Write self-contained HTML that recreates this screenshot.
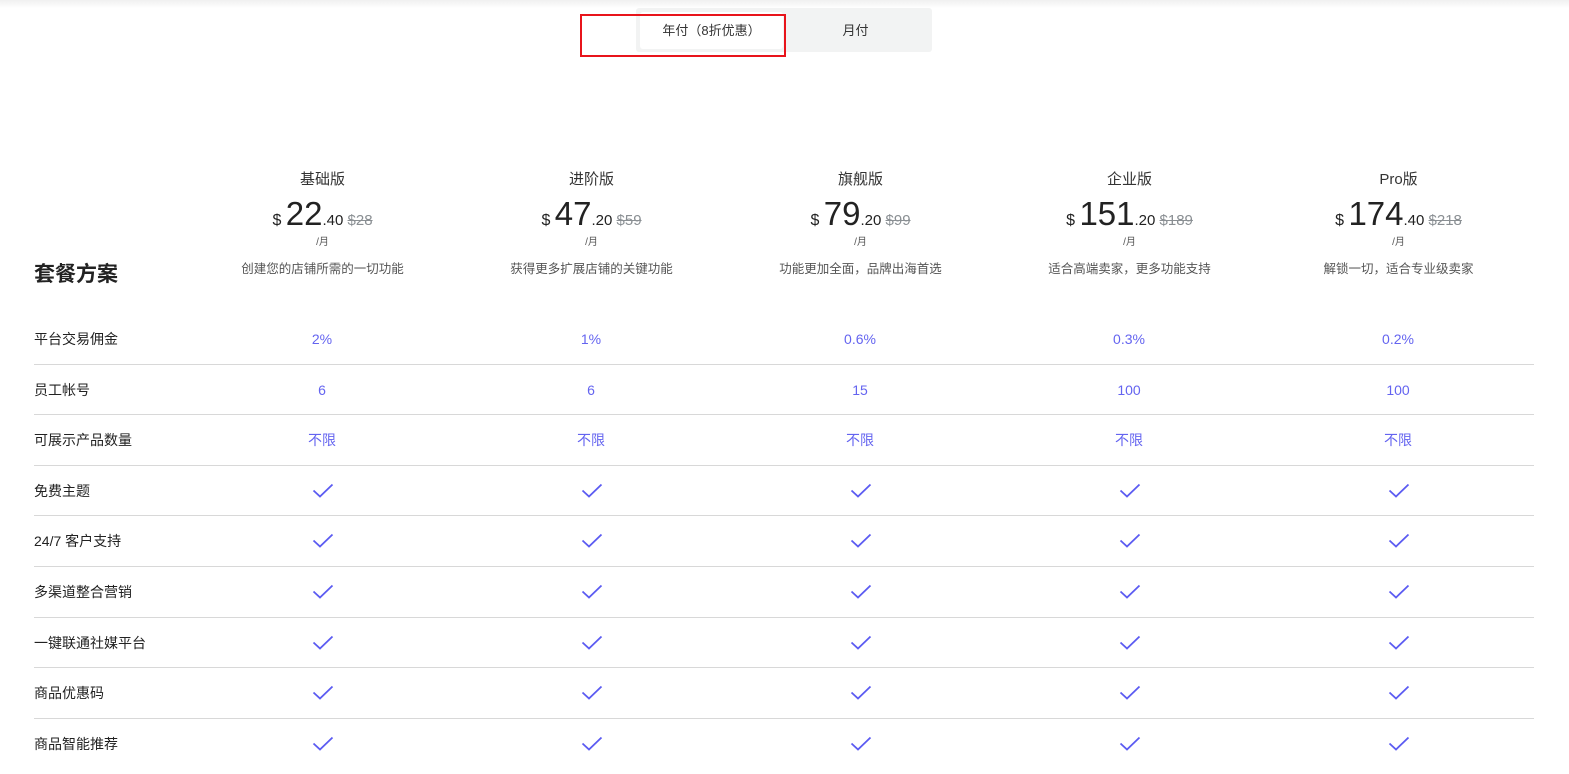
<!DOCTYPE html>
<html><head><meta charset="utf-8"><style>
*{margin:0;padding:0;box-sizing:border-box}
body{width:1569px;height:774px;background:#fff;position:relative;overflow:hidden;font-family:"Liberation Sans","Noto Sans CJK SC",sans-serif;color:#222}
.top{position:absolute;left:0;top:0;width:1569px;height:8px;background:linear-gradient(#f0f0f0,#fff)}
.tog{position:absolute;left:636px;top:8px;width:296px;height:44px;background:#f2f3f3;border-radius:3px}
.act{position:absolute;left:640px;top:12px;width:143px;height:37px;background:#fff;border-radius:3px;font-size:13px;text-align:center;line-height:37px;color:#333}
.mon{position:absolute;left:783px;top:12px;width:145px;height:37px;font-size:13px;text-align:center;line-height:37px;color:#333}
.red{position:absolute;left:580px;top:14px;width:206px;height:43px;border:2.5px solid #e8141b}
.col{position:absolute;top:168px;width:269px;text-align:center}
.name{font-size:15px;color:#333;height:22px}
.price{margin-top:8px;height:32px;white-space:nowrap;color:#222}
.price .d{font-size:16px}
.price .b{font-size:33px;line-height:32px}
.price .s{font-size:15px}
.price .o{font-size:15px;color:#8a8f93;text-decoration:line-through}
.per{font-size:10px;color:#555;margin-top:3px}
.desc{font-size:12.5px;color:#555;margin-top:10px}
.title{position:absolute;left:34px;top:258px;font-size:21px;font-weight:bold;color:#222}
.row{position:absolute;left:34px;width:1500px;height:50.6px;border-bottom:1px solid #d8d8d8}
.row .l{position:absolute;left:0;top:0;line-height:50px;font-size:14px;color:#222}
.row .v{position:absolute;top:0;width:100px;margin-left:-50px;text-align:center;line-height:50px;font-size:14px;color:#6464f0}
.row svg{position:absolute;top:17px;margin-left:-10px}
.row.last{border-bottom:none}
</style></head><body>
<div class="top"></div>
<div class="tog"></div>
<div class="act">年付（8折优惠）</div>
<div class="mon">月付</div>
<div class="red"></div>

<div class="col" style="left:188px"><div class="name">基础版</div><div class="price"><span class="d">$ </span><span class="b">22</span><span class="s">.40 </span><span class="o">$28</span></div><div class="per">/月</div><div class="desc">创建您的店铺所需的一切功能</div></div>
<div class="col" style="left:457px"><div class="name">进阶版</div><div class="price"><span class="d">$ </span><span class="b">47</span><span class="s">.20 </span><span class="o">$59</span></div><div class="per">/月</div><div class="desc">获得更多扩展店铺的关键功能</div></div>
<div class="col" style="left:726px"><div class="name">旗舰版</div><div class="price"><span class="d">$ </span><span class="b">79</span><span class="s">.20 </span><span class="o">$99</span></div><div class="per">/月</div><div class="desc">功能更加全面，品牌出海首选</div></div>
<div class="col" style="left:995px"><div class="name">企业版</div><div class="price"><span class="d">$ </span><span class="b">151</span><span class="s">.20 </span><span class="o">$189</span></div><div class="per">/月</div><div class="desc">适合高端卖家，更多功能支持</div></div>
<div class="col" style="left:1264px"><div class="name">Pro版</div><div class="price"><span class="d">$ </span><span class="b">174</span><span class="s">.40 </span><span class="o">$218</span></div><div class="per">/月</div><div class="desc">解锁一切，适合专业级卖家</div></div>

<div class="title">套餐方案</div>

<div class="row" style="top:314px"><div class="l">平台交易佣金</div><div class="v" style="left:288px">2%</div><div class="v" style="left:557px">1%</div><div class="v" style="left:826px">0.6%</div><div class="v" style="left:1095px">0.3%</div><div class="v" style="left:1364px">0.2%</div></div>
<div class="row" style="top:364.6px"><div class="l">员工帐号</div><div class="v" style="left:288px">6</div><div class="v" style="left:557px">6</div><div class="v" style="left:826px">15</div><div class="v" style="left:1095px">100</div><div class="v" style="left:1364px">100</div></div>
<div class="row" style="top:415.2px"><div class="l">可展示产品数量</div><div class="v" style="left:288px">不限</div><div class="v" style="left:557px">不限</div><div class="v" style="left:826px">不限</div><div class="v" style="left:1095px">不限</div><div class="v" style="left:1364px">不限</div></div>
<div id="checks"></div>
<script>
var labels=["免费主题","24/7 客户支持","多渠道整合营销","一键联通社媒平台","商品优惠码","商品智能推荐"];
var h="";
labels.forEach(function(t,i){
 var top=465.8+i*50.6;
 h+='<div class="row'+(i==5?' last':'')+'" style="top:'+top+'px"><div class="l">'+t+'</div>';
 [288,557,826,1095,1364].forEach(function(x){
  h+='<svg style="left:'+x+'px" width="22" height="16" viewBox="0 0 22 16"><path d="M1.5 7.5 L8 13.5 L20.5 1.5" fill="none" stroke="#5b5bf2" stroke-width="1.8"/></svg>';
 });
 h+='</div>';
});
document.getElementById("checks").outerHTML=h;
</script>
</body></html>
